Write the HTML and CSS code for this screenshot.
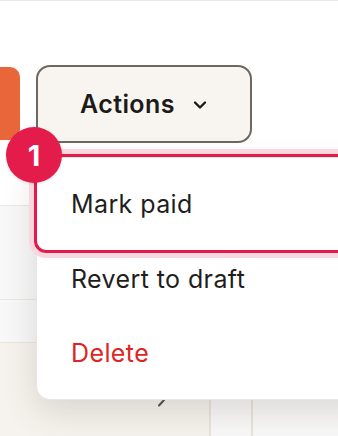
FILE: index.html
```html
<!DOCTYPE html>
<html>
<head>
<meta charset="utf-8">
<link rel="stylesheet" href="styles.css">
</head>
<body>
<div class="page">
  <div class="toolbar">
    <div class="btn-primary"></div>
    <div class="btn-actions">
      <span>Actions</span>
      <svg class="chev" width="14" height="10" viewBox="0 0 14 10"><path d="M2 2.5 L7 7.5 L12 2.5" fill="none" stroke="#1c1b1a" stroke-width="2.4" stroke-linecap="round" stroke-linejoin="round"/></svg>
    </div>
  </div>
  <div class="table">
    <div class="row r1"></div>
    <div class="row r2"></div>
    <div class="row r3"></div>
    <div class="row r4">
      <div class="cell c1"><svg width="10" height="14" viewBox="0 0 10 14"><path d="M3 1.5 L8 7 L3 12.5" fill="none" stroke="#555049" stroke-width="2" stroke-linecap="round" stroke-linejoin="round"/></svg></div>
      <div class="cell c2"></div>
      <div class="cell c3"></div>
    </div>
  </div>
  <div class="menu">
    <div class="item">Mark paid</div>
    <div class="item">Revert to draft</div>
    <div class="item danger">Delete</div>
    <div class="highlight"></div>
  </div>
  <div class="badge">1</div>
</div>
</body>
</html>
```
FILE: styles.css
```css
* { box-sizing: border-box; }
html, body { margin: 0; padding: 0; }
body {
  background: #ffffff;
  font-family: Inter, "DejaVu Sans", sans-serif;
  width: 338px;
  height: 436px;
  overflow: hidden;
}
.page {
  position: relative;
  width: 338px;
  height: 436px;
  border-top: 1px solid #ece7e1;
  overflow: hidden;
}
.toolbar {
  display: flex;
  gap: 16px;
  padding-top: 64px;
  height: 142px;
  align-items: flex-start;
}
.btn-primary {
  margin-top: 2px;
  width: 60px;
  height: 73px;
  margin-left: -40px;
  background: #e8663a;
  border-radius: 10px;
}
.btn-actions {
  width: 216px;
  height: 78px;
  border: 2px solid #6e6760;
  border-radius: 14px;
  background: #f8f5f0;
  display: flex;
  align-items: center;
  padding-left: 42px;
  gap: 18px;
  font-size: 25px;
  font-weight: 600;
  color: #1c1b1a;
  letter-spacing: 0.4px;
}
.chev { margin-top: 2px; }
.table { display: flex; flex-direction: column; }
.row { border-bottom: 1px solid #ebe6df; }
.r1 { height: 63px; background: #ffffff; }
.r2 { height: 94px; background: #f8f8f9; }
.r3 { height: 43px; background: #f8f8f9; }
.r4 { height: 100px; display: flex; border-bottom: none; }
.cell { height: 100%; }
.c1 { width: 209px; background: #f6f3ee; padding: 48px 0 0 156px; }
.c2 { width: 42px; background: #f9f9f9; border-left: 2px solid #e9e4dd; }
.c3 { flex: 1; background: #f9f9f9; border-left: 2px solid #e9e4dd; }
.menu {
  position: absolute;
  left: 36px;
  top: 156px;
  width: 340px;
  height: 243px;
  background: #ffffff;
  border: 1px solid #ebe6df;
  border-radius: 14px;
  padding: 9px 0 9px 34px;
  box-shadow: 0 12px 34px rgba(70, 50, 30, 0.16);
}
.item {
  height: 74.5px;
  display: flex;
  align-items: center;
  font-size: 25px;
  color: #1f1e1d;
  letter-spacing: 0.4px;
}
.danger { color: #dc2626; }
.highlight {
  position: absolute;
  left: -3px;
  top: -4px;
  width: 360px;
  height: 99px;
  border: 3.5px solid #e31b4b;
  border-radius: 12px;
  box-shadow: 0 0 0 5px #f9d7df;
}
.badge {
  position: absolute;
  left: 6px;
  top: 126px;
  width: 56px;
  height: 56px;
  border-radius: 50%;
  background: #e31c4c;
  color: #ffffff;
  font-size: 29px;
  font-weight: 700;
  display: flex;
  align-items: center;
  justify-content: center;
  box-shadow: 0 1px 3px rgba(0,0,0,0.12);
}
```
